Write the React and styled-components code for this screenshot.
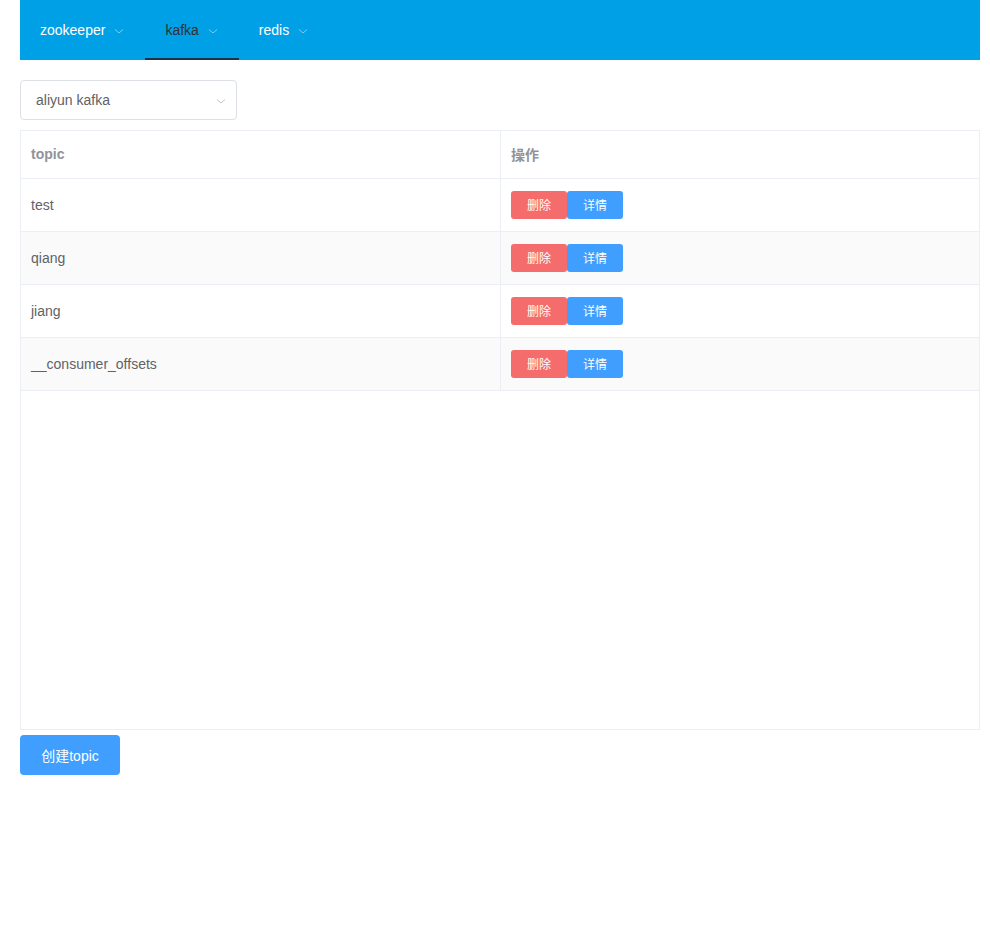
import React from 'react'
import styled, { createGlobalStyle } from 'styled-components'

const Global = createGlobalStyle`
    html, body {
        margin: 0;
        padding: 0;
        background: #fff;
        font-family: "Liberation Sans", Arial, "Noto Sans CJK SC", sans-serif;
    }
`

const Page = styled.div`
    width: 1000px;
    padding: 0 20px;
    box-sizing: border-box;
`

const Menu = styled.div`
    display: flex;
    width: 960px;
    height: 60px;
    background-color: #00a0e6;
`

const MenuItem = styled.div`
    display: flex;
    align-items: center;
    height: 60px;
    padding: 0 20px;
    box-sizing: border-box;
    font-size: 14px;
    color: ${props => props.active ? '#303133' : '#fff'};
    border-bottom: 2px solid ${props => props.active ? '#1d3447' : 'transparent'};
    padding-top: 2px;
`

const Arrow = styled.svg`
    width: 12px;
    height: 12px;
    margin-left: 8px;
    margin-top: 1px;
`

const Chevron = ({ color }) => (
    <Arrow viewBox="0 0 12 12">
        <path d="M2 4.5 L6 8 L10 4.5" fill="none" stroke={color} strokeWidth="1" />
    </Arrow>
)

const Select = styled.div`
    display: flex;
    align-items: center;
    justify-content: space-between;
    width: 217px;
    height: 40px;
    margin-top: 20px;
    padding: 0 9px 0 15px;
    box-sizing: border-box;
    border: 1px solid #dcdfe6;
    border-radius: 4px;
    font-size: 14px;
    color: #606266;
`

const Table = styled.div`
    width: 960px;
    height: 600px;
    margin-top: 10px;
    border: 1px solid #ebeef5;
    box-sizing: border-box;
`

const Row = styled.div`
    display: grid;
    grid-template-columns: 480px 1fr;
    height: ${props => props.head ? '47px' : '52px'};
    border-bottom: 1px solid #ebeef5;
    background-color: ${props => props.striped ? '#fafafa' : '#fff'};
`

const Cell = styled.div`
    display: flex;
    align-items: center;
    padding: 0 10px 1px;
    font-size: 14px;
    font-weight: ${props => props.head ? 'bold' : 'normal'};
    color: ${props => props.head ? '#909399' : '#606266'};
    border-right: ${props => props.first ? '1px solid #ebeef5' : 'none'};
`

const SmallButton = styled.button`
    width: 56px;
    height: 28px;
    border: none;
    border-radius: 3px;
    font-size: 12px;
    color: #fff;
    font-family: inherit;
    padding: 0;
    background-color: ${props => props.danger ? '#f56c6c' : '#409eff'};
`

const CreateButton = styled.button`
    width: 100px;
    height: 40px;
    margin-top: 5px;
    border: none;
    border-radius: 4px;
    font-size: 14px;
    font-family: inherit;
    color: #fff;
    background-color: #409eff;
`

const Spacer = styled.div`
    height: 135px;
`

const topics = ['test', 'qiang', 'jiang', '__consumer_offsets']

export default function App() {
    return (
        <Page>
            <Global />
            <Menu>
                <MenuItem>zookeeper<Chevron color="#7fcdf0" /></MenuItem>
                <MenuItem active>kafka<Chevron color="#7fcdf0" /></MenuItem>
                <MenuItem>redis<Chevron color="#7fcdf0" /></MenuItem>
            </Menu>
            <Select>
                aliyun kafka
                <Chevron color="#c0c4cc" />
            </Select>
            <Table>
                <Row head>
                    <Cell head first>topic</Cell>
                    <Cell head>操作</Cell>
                </Row>
                {topics.map((t, i) => (
                    <Row key={t} striped={i % 2 === 1}>
                        <Cell first>{t}</Cell>
                        <Cell>
                            <SmallButton danger>删除</SmallButton>
                            <SmallButton>详情</SmallButton>
                        </Cell>
                    </Row>
                ))}
            </Table>
            <CreateButton>创建topic</CreateButton>
            <Spacer />
        </Page>
    )
}
